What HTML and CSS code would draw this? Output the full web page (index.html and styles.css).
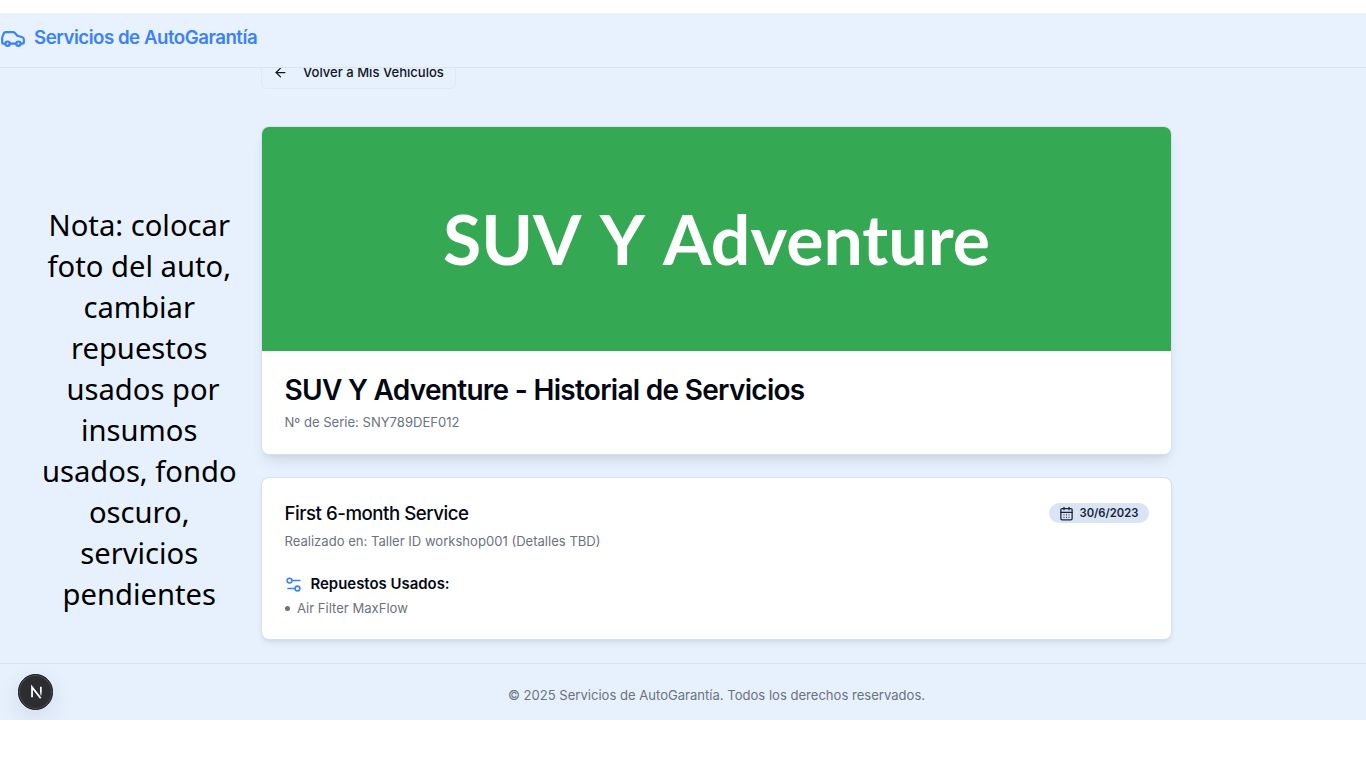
FILE: index.html
```html
<!DOCTYPE html>
<html lang="es">
<head>
<meta charset="utf-8">
<title>Servicios de AutoGarantía</title>
<link rel="stylesheet" href="styles.css">
</head>
<body>
<div class="app">
  <header class="header">
    <svg class="logo" viewBox="0 0 24 24" fill="none" stroke="currentColor" stroke-width="2" stroke-linecap="round" stroke-linejoin="round"><path d="M19 17.200h2c.6 0 1-.4 1-1v-3c0-.9-.7-1.700-1.500-1.900C18.700 10.800 16 10 16 10s-1.300-1.800-2.200-2.700c-.5-.4-1.100-.7-1.800-.7H5c-.6 0-1.100.4-1.400.9l-1.200 3A3.700 3.700 0 0 0 2 12v4.200c0 .6.4 1 1 1h2"/><circle cx="7" cy="17.200" r="2"/><path d="M9 17.200h6"/><circle cx="17" cy="17.200" r="2"/></svg>
    <span class="brand">Servicios de AutoGarantía</span>
  </header>
  <div class="body">
    <aside class="note">Nota: colocar<br>foto del auto,<br>cambiar<br>repuestos<br>&nbsp;usados por<br>insumos<br>usados, fondo<br>oscuro,<br>servicios<br>pendientes</aside>
    <main class="main">
      <div class="back-row">
        <a class="back">
          <svg class="arrow" viewBox="0 0 24 24" fill="none" stroke="currentColor" stroke-width="2" stroke-linecap="round" stroke-linejoin="round"><path d="m12 19-7-7 7-7"/><path d="M19 12H5"/></svg>
          <span>Volver a Mis Vehículos</span>
        </a>
      </div>
      <section class="card vehicle">
        <div class="banner"><span class="banner-text">SUV Y Adventure</span></div>
        <div class="vehicle-info">
          <h1 class="title">SUV Y Adventure - Historial de Servicios</h1>
          <p class="muted">Nº de Serie: SNY789DEF012</p>
        </div>
      </section>
      <section class="card service">
        <div class="service-head">
          <h2 class="service-title">First 6-month Service</h2>
          <span class="badge">
            <svg class="calendar" viewBox="0 0 24 24" fill="none" stroke="currentColor" stroke-width="2" stroke-linecap="round" stroke-linejoin="round"><path d="M8 2v4M16 2v4"/><rect x="3" y="4" width="18" height="18" rx="2"/><path d="M3 10h18M8 14h.01M12 14h.01M16 14h.01M8 18h.01M12 18h.01M16 18h.01"/></svg>
            <span>30/6/2023</span>
          </span>
        </div>
        <p class="muted workshop">Realizado en: Taller ID workshop001 (Detalles TBD)</p>
        <h3 class="parts-title">
          <svg class="settings" viewBox="0 0 24 24" fill="none" stroke="currentColor" stroke-width="2" stroke-linecap="round" stroke-linejoin="round"><path d="M20 7h-9"/><path d="M14 17H5"/><circle cx="17" cy="17" r="3"/><circle cx="7" cy="7" r="3"/></svg>
          <span>Repuestos Usados:</span>
        </h3>
        <ul class="parts"><li class="part">Air Filter MaxFlow</li></ul>
      </section>
    </main>
  </div>
  <footer class="footer"><span class="copyright">© 2025 Servicios de AutoGarantía. Todos los derechos reservados.</span></footer>
  <div class="dev-badge">
    <svg class="dev-mark" viewBox="0 0 36 36" fill="none"><defs><linearGradient id="fade" x1="0" y1="12" x2="0" y2="25" gradientUnits="userSpaceOnUse"><stop offset=".45" stop-color="#fff"/><stop offset="1" stop-color="#fff" stop-opacity="0"/></linearGradient></defs><path d="M14 24V13L23.300 25" stroke="#fff" stroke-width="1.900"/><path d="M23.500 12.500V22" stroke="url(#fade)" stroke-width="1.800"/></svg>
  </div>
</div>
</body>
</html>
```
FILE: styles.css
```css
* { box-sizing: border-box; }
body { margin: 0; background: #fff; font-family: Inter, "Liberation Sans", sans-serif; }
h1, h2, h3, p, ul { margin: 0; padding: 0; }
svg { display: block; flex: none; }
.app { position: relative; margin-top: 13px; height: 707px; background: #e7f1fe; overflow: hidden; display: flex; flex-direction: column; }
.header { position: relative; z-index: 1; height: 55px; flex: none; display: flex; align-items: center; gap: 8px; padding-bottom: 5px; border-bottom: 1px solid #d9e4f1; color: #3b82f6; background: #e8f1fe; }
.logo { width: 26px; height: 26px; }
.brand { font-size: 18.670px; font-weight: 600; letter-spacing: -.48px; line-height: 26px; }
.body { flex: 1; display: flex; min-height: 0; }
.note { width: 262px; flex: none; padding: 137px 0 0 16.500px; text-align: center; font: 29.200px/41px "Noto Sans", sans-serif; color: #000; white-space: nowrap; }
.main { width: 909px; flex: none; }
.back-row { height: 59px; display: flex; align-items: flex-start; }
.back { width: 195px; height: 38px; margin: -17px 0 0 -1px; display: flex; align-items: center; gap: 15px; padding: 4px 0 0 11px; border: 1px solid #dee9f5; border-radius: 6px; font-size: 13.070px; font-weight: 500; color: #101623; }
.arrow { width: 15px; height: 15px; }
.card { border-radius: 7px; background: #fff; overflow: hidden; }
.vehicle { height: 327px; box-shadow: 0 0 0 1px #d6e1ef, 0 9px 14px -3px rgba(0,0,0,.1), 0 4px 6px -4px rgba(0,0,0,.1); }
.banner { height: 224px; background: #34a853; display: flex; align-items: center; justify-content: center; }
.banner-text { font: 700 69.800px/90px Lato, sans-serif; word-spacing: 6.500px; color: #fff; white-space: nowrap; margin-top: -3px; }
.vehicle-info { padding: 22px 22.500px; }
.title { font-size: 28px; line-height: 34px; font-weight: 600; letter-spacing: -.71px; color: #030712; }
.muted { font-size: 13.070px; line-height: 19px; color: #6b7280; }
.vehicle-info .muted { margin-top: 6px; }
.service { margin-top: 24px; height: 161px; padding: 22px 22.500px; box-shadow: 0 0 0 1px #d6e1ef, 0 4px 6px -1px rgba(0,0,0,.1), 0 2px 4px -2px rgba(0,0,0,.1); }
.service-head { display: flex; align-items: center; justify-content: space-between; height: 26px; }
.service-title { padding-top: 2px; font-size: 18.670px; font-weight: 500; line-height: 26px; letter-spacing: -.47px; color: #030712; }
.badge { width: 100px; height: 20px; display: flex; align-items: center; gap: 6px; padding-left: 10px; border-radius: 10px; background: #d9e4f4; font-size: 11.250px; font-weight: 600; color: #17223b; }
.calendar { width: 15px; height: 15px; }
.workshop { margin-top: 6px; }
.parts-title { margin: 23px 0 0 -1px; height: 20px; display: flex; align-items: center; gap: 8px; font-size: 14.930px; font-weight: 600; color: #030712; }
.settings { width: 19px; height: 19px; color: #3b82f6; }
.parts { list-style: none; margin-top: 5px; }
.part { display: flex; align-items: center; gap: 7px; font-size: 13.070px; line-height: 19px; color: #6b7280; }
.part::before { content: ""; width: 5px; height: 5px; margin-left: .5px; border-radius: 50%; background: #64748b; }
.footer { height: 57px; flex: none; border-top: 1px solid #d8e3ef; display: flex; align-items: center; padding: 6px 0 0 67px; justify-content: center; }
.copyright { font-size: 13.070px; color: #6b7280; }
.dev-badge { position: absolute; left: 17.500px; bottom: 10.500px; width: 35.500px; height: 35.500px; border-radius: 50%; background: #2b2d30; border: 1px solid #17191c; box-shadow: inset 0 0 0 1px #4c4f53, 0 8px 24px rgba(0,0,40,.1); }
.dev-mark { width: 33.500px; height: 33.500px; }
```
